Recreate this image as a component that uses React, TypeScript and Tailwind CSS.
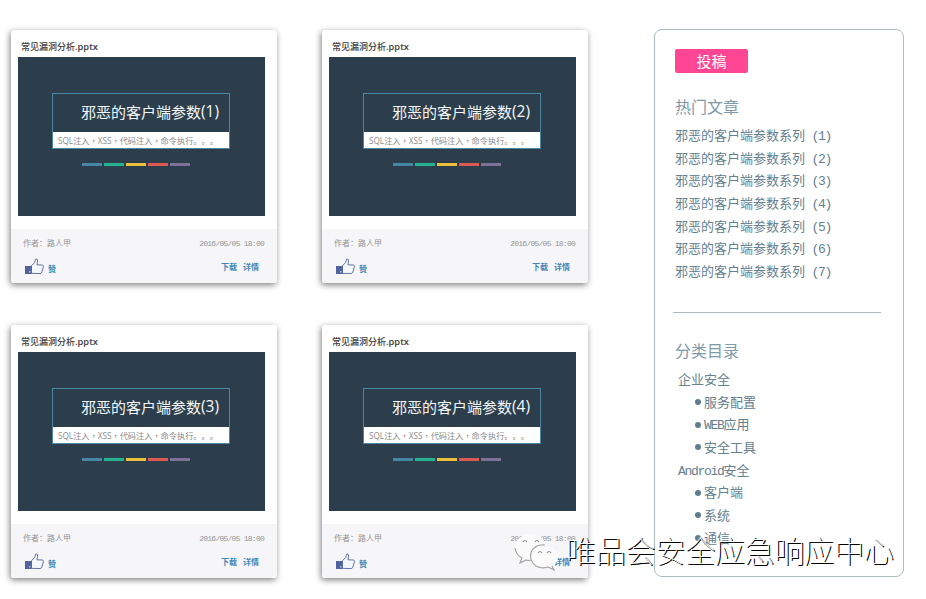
import React from "react";

const cjk = "font-['Open_Sans','Noto_Sans_CJK_SC',sans-serif]";
const mono = "font-['Liberation_Mono','Noto_Sans_CJK_SC',monospace]";

function Thumb() {
  return (
    <svg width="21" height="17" viewBox="0 0 21 17" className="block shrink-0">
      <path
        d="M7.5 7.6 L10.7 4.6 L11.5 1.2 Q13 .3 13.5 2 Q13.8 4 12.9 6.8 L18.3 7 Q19.8 7.3 19.4 8.8 L17.8 14.2 Q17.4 15.5 16 15.5 L7.5 15.4 Z"
        fill="#f4f7fc"
        stroke="#6475a3"
        strokeWidth="1"
      />
      <rect x="1" y="8" width="6.6" height="8" fill="#4f639c" />
      <rect x="5" y="13" width="1.5" height="1.5" fill="#b9c3df" />
    </svg>
  );
}

function Comma() {
  return <span className="font-['Noto_Sans_CJK_TC',sans-serif]" lang="zh-TW">，</span>;
}

function Card({ n }: { n: number }) {
  return (
    <article className="flex h-[253px] w-[266px] flex-col overflow-visible rounded-[3px] bg-white shadow-[-1px_2px_6px_rgba(0,0,0,0.5)]">
      <h3 className={`h-[27px] pl-[10px] pt-[9px] text-[9px] leading-[16px] font-medium whitespace-nowrap text-[#3c3c3c] ${cjk}`}>
        常见漏洞分析<span className="text-[9.3px] font-semibold">.pptx</span>
      </h3>
      <div className="ml-[7px] flex h-[159px] w-[247px] flex-col bg-[#2c3e4c] pl-[34px] pt-[36px]">
        <div className="flex h-[56px] w-[178px] flex-col border border-[#4b87a5] bg-white">
          <div className={`flex h-[38px] items-center bg-[#2c3e4c] pb-[2px] pl-[28px] text-[15px] whitespace-nowrap text-[#f4f7f8] ${cjk}`}>
            <span>邪恶的客户端参数</span>
            <span className="text-[15.5px]">({n})</span>
          </div>
          <div className={`h-[16px] pl-[5px] text-[8.2px] leading-[17px] whitespace-nowrap text-[#8a8a8a] [text-spacing-trim:space-all] ${cjk}`}>
            SQL注入<Comma />XSS<Comma />代码注入<Comma />命令执行。。。
          </div>
        </div>
        <div className="ml-[30px] mt-[14px] flex gap-[2px]">
          <i className="h-[3px] w-[20px] bg-[#4786a4]" />
          <i className="h-[3px] w-[20px] bg-[#27b393]" />
          <i className="h-[3px] w-[20px] bg-[#eebf3c]" />
          <i className="h-[3px] w-[20px] bg-[#dd5952]" />
          <i className="h-[3px] w-[20px] bg-[#7d719a]" />
        </div>
      </div>
      <footer className={`mt-[13px] h-[54px] rounded-b-[3px] bg-[#f6f6f8] ${mono}`}>
        <div className="flex justify-between pl-[12px] pr-[13px] pt-[8px] text-[8px] leading-[14px] text-[#949494]">
          <span>作者：路人甲</span>
          <span className="tracking-[-0.75px]">2016/05/05 18:00</span>
        </div>
        <div className="flex pl-[13px] pr-[18px] pt-[7px] text-[8px] leading-[16px] font-bold text-[#3f87b5]">
          <Thumb />
          <span className="ml-[3px] mt-[4px]">赞</span>
          <span className="ml-auto mt-[2px]">下载</span>
          <span className="ml-[6px] mt-[2px]">详情</span>
        </div>
      </footer>
    </article>
  );
}

function Category({ name, latin, items }: { name: string; latin?: string; items: { latin?: string; text: string }[] }) {
  return (
    <section>
      <div className="h-[22.7px] pl-[3px]">
        <span className="tracking-[-1.3px]">{latin}</span>
        {name}
      </div>
      <ul>
        {items.map((it) => (
          <li key={it.text} className="flex h-[22.7px] items-center pl-[20px]">
            <i className="mr-[3px] mb-[4px] h-[6px] w-[6px] rounded-full bg-[#5f7d8f]" />
            <span className="tracking-[-1.3px]">{it.latin}</span>
            <span>{it.text}</span>
          </li>
        ))}
      </ul>
    </section>
  );
}

function Sidebar() {
  return (
    <aside className={`h-[548px] w-[250px] rounded-[8px] border border-[#abbcc4] pl-[20px] pt-[19px] text-[#65808f] ${mono}`}>
      <button className={`flex h-[24px] w-[73px] items-center justify-center rounded-[2px] bg-[#ff4694] text-[15px] text-white ${cjk}`}>
        投稿
      </button>
      <h2 className="mt-[24px] h-[24px] text-[16px] leading-[24px] text-[#7f99a7]">热门文章</h2>
      <ul className="mt-[5px] text-[13px] leading-[22.7px]">
        {[1, 2, 3, 4, 5, 6, 7].map((n) => (
          <li key={n} className="h-[22.7px] whitespace-pre">
            邪恶的客户端参数系列<span className="tracking-[-1.3px]"> ({n})</span>
          </li>
        ))}
      </ul>
      <hr className="-ml-[2px] mt-[27px] w-[208px] border-[#abbabf]" />
      <h2 className="mt-[28px] h-[24px] text-[16px] leading-[24px] text-[#7f99a7]">分类目录</h2>
      <div className="mt-[5px] text-[13px] leading-[22.7px]">
        <Category name="企业安全" items={[{ text: "服务配置" }, { latin: "WEB", text: "应用" }, { text: "安全工具" }]} />
        <Category latin="Android" name="安全" items={[{ text: "客户端" }, { text: "系统" }, { text: "通信" }]} />
      </div>
    </aside>
  );
}

function Watermark() {
  return (
    <div className="absolute left-[514px] top-[532px] flex">
      <svg width="46" height="42" viewBox="0 0 46 42" className="block">
        <path
          d="M17 2 C8 2 1 8 1 15 C1 20 4 24 8 26 L6 31 L12 28 Q18 30 24 27 Q32 23 32 14 C31 7 25 2 17 2Z"
          fill="#fbfbfc"
        />
        <path d="M1 16 Q2 23 8 26 L6 31 L12 28 Q15 29 18 28" fill="none" stroke="#a5a5a5" strokeWidth="1.2" />
        <path
          d="M29 13 C21 13 16 18 16 24 C16 31 22 36 30 36 L34 35 L40 38 L38 34 C42 32 44 28 44 24 C44 18 37 13 29 13Z"
          fill="#fbfbfc"
        />
        <path d="M31 13 Q22 12 17.5 19 Q14 28 22 34 Q28 37 34 35 L40 38 L38 34" fill="none" stroke="#a5a5a5" strokeWidth="1.2" />
        <path d="M9 10 q2 -3 4 0 M21 10 q2 -3 4 0 M24 21 q2 -3 4 0 M33 21 q2 -3 4 0" fill="none" stroke="#8e8e8e" strokeWidth="1.2" />
      </svg>
      <span className="ml-[6px] -mt-[5px] text-[29.8px] leading-[44px] font-thin whitespace-nowrap text-white [text-shadow:1px_1px_0_#000,1px_1px_0_#333] font-['Noto_Sans_CJK_SC',sans-serif]">
        唯品会安全应急响应中心
      </span>
    </div>
  );
}

export default function App() {
  return (
    <div className="relative h-[599px] w-[926px] overflow-hidden bg-white">
      <main className="flex pl-[11px] pt-[29px]">
        <div className="mt-px grid grid-cols-[266px_266px] gap-x-[45px] gap-y-[42px]">
          {[1, 2, 3, 4].map((n) => (
            <Card key={n} n={n} />
          ))}
        </div>
        <div className="ml-[66px]">
          <Sidebar />
        </div>
      </main>
      <Watermark />
    </div>
  );
}
